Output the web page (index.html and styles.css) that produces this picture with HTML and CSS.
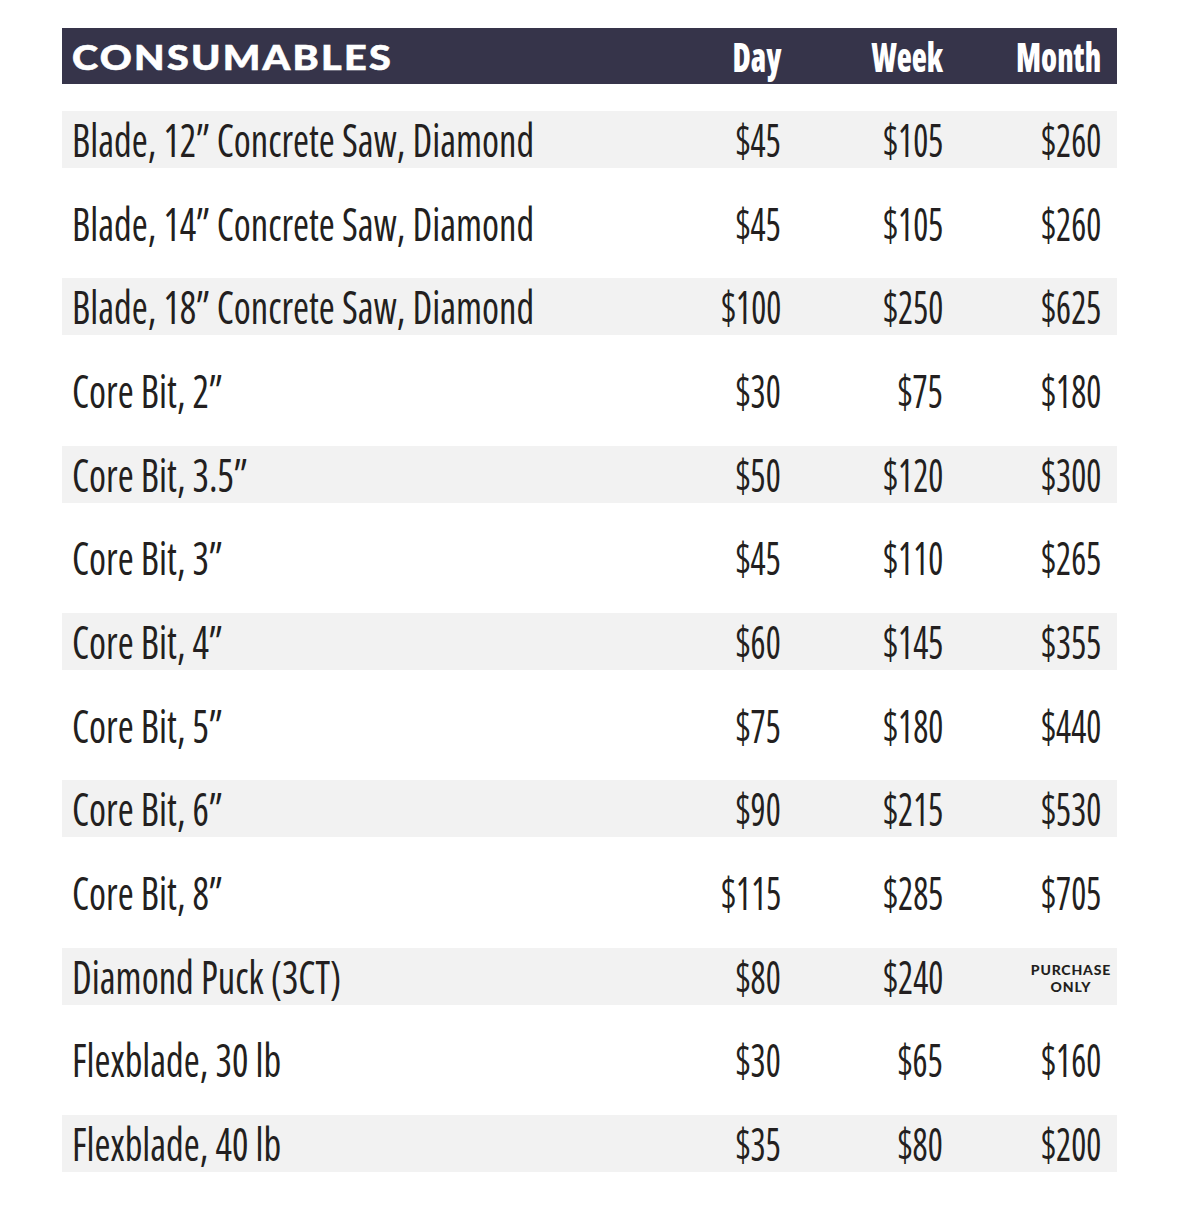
FILE: index.html
```html
<!DOCTYPE html>
<html>
<head>
<meta charset="utf-8">
<link rel="stylesheet" href="styles.css">
</head>
<body>
<div class="sheet">
  <div class="hd">
    <div class="title"><span>CONSUMABLES</span></div>
    <div class="hcol"><span>Day</span></div>
    <div class="hcol"><span>Week</span></div>
    <div class="hcol"><span>Month</span></div>
  </div>
  <div class="rows">
    <div class="row alt"><div class="lbl"><span>Blade, 12” Concrete Saw, Diamond</span></div><div class="num"><span>$45</span></div><div class="num"><span>$105</span></div><div class="num"><span>$260</span></div></div>
    <div class="row"><div class="lbl"><span>Blade, 14” Concrete Saw, Diamond</span></div><div class="num"><span>$45</span></div><div class="num"><span>$105</span></div><div class="num"><span>$260</span></div></div>
    <div class="row alt"><div class="lbl"><span>Blade, 18” Concrete Saw, Diamond</span></div><div class="num"><span>$100</span></div><div class="num"><span>$250</span></div><div class="num"><span>$625</span></div></div>
    <div class="row"><div class="lbl"><span>Core Bit, 2”</span></div><div class="num"><span>$30</span></div><div class="num"><span>$75</span></div><div class="num"><span>$180</span></div></div>
    <div class="row alt"><div class="lbl"><span>Core Bit, 3.5”</span></div><div class="num"><span>$50</span></div><div class="num"><span>$120</span></div><div class="num"><span>$300</span></div></div>
    <div class="row"><div class="lbl"><span>Core Bit, 3”</span></div><div class="num"><span>$45</span></div><div class="num"><span>$110</span></div><div class="num"><span>$265</span></div></div>
    <div class="row alt"><div class="lbl"><span>Core Bit, 4”</span></div><div class="num"><span>$60</span></div><div class="num"><span>$145</span></div><div class="num"><span>$355</span></div></div>
    <div class="row"><div class="lbl"><span>Core Bit, 5”</span></div><div class="num"><span>$75</span></div><div class="num"><span>$180</span></div><div class="num"><span>$440</span></div></div>
    <div class="row alt"><div class="lbl"><span>Core Bit, 6”</span></div><div class="num"><span>$90</span></div><div class="num"><span>$215</span></div><div class="num"><span>$530</span></div></div>
    <div class="row"><div class="lbl"><span>Core Bit, 8”</span></div><div class="num"><span>$115</span></div><div class="num"><span>$285</span></div><div class="num"><span>$705</span></div></div>
    <div class="row alt"><div class="lbl"><span>Diamond Puck (3CT)</span></div><div class="num"><span>$80</span></div><div class="num"><span>$240</span></div><div class="num po-cell"><div class="po">PURCHASE<br>ONLY</div></div></div>
    <div class="row"><div class="lbl"><span>Flexblade, 30 lb</span></div><div class="num"><span>$30</span></div><div class="num"><span>$65</span></div><div class="num"><span>$160</span></div></div>
    <div class="row alt"><div class="lbl"><span>Flexblade, 40 lb</span></div><div class="num"><span>$35</span></div><div class="num"><span>$80</span></div><div class="num"><span>$200</span></div></div>
  </div>
</div>
</body>
</html>
```
FILE: styles.css
```css
html, body {
  margin: 0;
  padding: 0;
  background: #ffffff;
}

.sheet {
  width: 1055px;
  margin: 28px 0 0 62px;
  display: flex;
  flex-direction: column;
  gap: 27px;
}

.hd,
.row {
  display: grid;
  grid-template-columns: 559px 150px 162px 158px;
  padding: 0 16px 0 10px;
}

.hd {
  height: 56px;
  background: #36344a;
  color: #ffffff;
  align-items: center;
}

.title {
  font-family: "Lato", sans-serif;
  font-weight: 900;
  font-size: 35px;
  line-height: 56px;
  letter-spacing: 2px;
  -webkit-text-stroke: 0.6px #ffffff;
}

.title span {
  display: inline-block;
  transform: scaleX(1.13);
  transform-origin: left center;
}

.hcol {
  text-align: right;
  font-family: "Open Sans", sans-serif;
  font-stretch: 75%;
  font-weight: 800;
  font-size: 41px;
  line-height: 56px;
}

.hcol span {
  display: inline-block;
  transform: scaleX(0.76);
  transform-origin: right center;
}

.rows {
  display: flex;
  flex-direction: column;
  gap: 26.67px;
}

.row {
  height: 57px;
  color: #231f20;
  font-family: "Open Sans", sans-serif;
  font-stretch: 75%;
  font-weight: 400;
  font-size: 46px;
  line-height: 56px;
}

.row.alt {
  background: #f2f2f2;
}

.lbl {
  white-space: nowrap;
}

.lbl span {
  display: inline-block;
  transform: scaleX(0.84);
  transform-origin: left center;
}

.num {
  text-align: right;
  white-space: nowrap;
}

.num span {
  display: inline-block;
  transform: scaleX(0.77);
  transform-origin: right center;
}

.po-cell {
  display: flex;
  justify-content: flex-end;
  align-items: center;
}

.po {
  margin-right: -10px;
  margin-top: 4px;
  text-align: center;
  font-family: "Lato", sans-serif;
  font-weight: 900;
  font-size: 14px;
  line-height: 17px;
  letter-spacing: 0.8px;
  color: #231f20;
}
```
